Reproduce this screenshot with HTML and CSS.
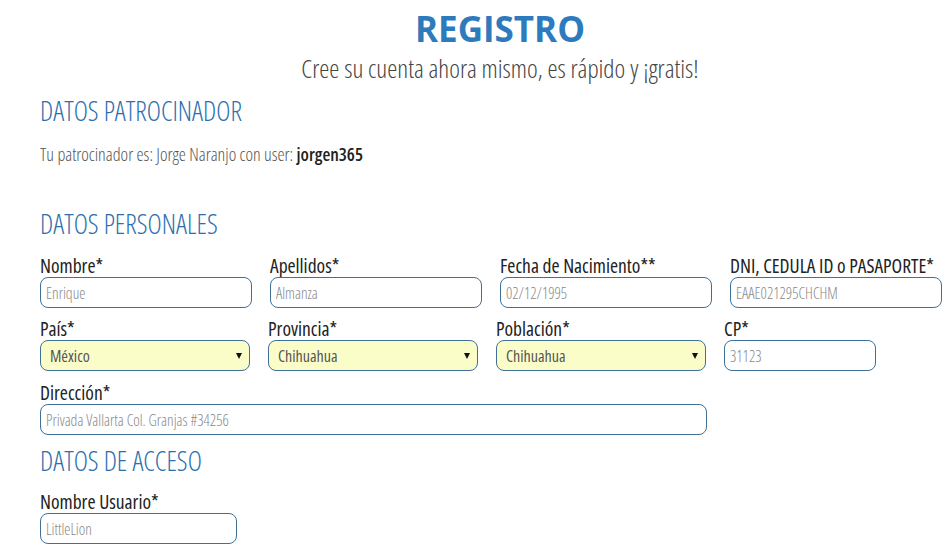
FILE: index.html
```html
<!DOCTYPE html>
<html lang="es">
<head>
<meta charset="utf-8">
<title>Registro</title>
<link rel="stylesheet" href="styles.css">
</head>
<body>
<div class="page">
  <header class="hero">
    <h1 class="title">REGISTRO</h1>
    <p class="subtitle">Cree su cuenta ahora mismo, es rápido y ¡gratis!</p>
  </header>

  <section class="sponsor">
    <h2 class="section-title">DATOS PATROCINADOR</h2>
    <p class="sponsor-text">Tu patrocinador es: Jorge Naranjo con user: <b>jorgen365</b></p>
  </section>

  <section class="personal">
    <h2 class="section-title">DATOS PERSONALES</h2>
    <div class="row row-a">
      <label class="field"><span class="lbl">Nombre*</span><input class="inp" placeholder="Enrique"></label>
      <label class="field"><span class="lbl">Apellidos*</span><input class="inp" placeholder="Almanza"></label>
      <label class="field"><span class="lbl">Fecha de Nacimiento**</span><input class="inp" placeholder="02/12/1995"></label>
      <label class="field"><span class="lbl">DNI, CEDULA ID o PASAPORTE*</span><input class="inp" placeholder="EAAE021295CHCHM"></label>
    </div>
    <div class="row row-b">
      <label class="field sel-field"><span class="lbl">País*</span><span class="sel-wrap"><select class="sel"><option>México</option></select></span></label>
      <label class="field sel-field"><span class="lbl">Provincia*</span><span class="sel-wrap"><select class="sel"><option>Chihuahua</option></select></span></label>
      <label class="field sel-field"><span class="lbl">Población*</span><span class="sel-wrap"><select class="sel"><option>Chihuahua</option></select></span></label>
      <label class="field cp-field"><span class="lbl">CP*</span><input class="inp" placeholder="31123"></label>
    </div>
    <div class="row row-c">
      <label class="field addr-field"><span class="lbl">Dirección*</span><input class="inp" placeholder="Privada Vallarta Col. Granjas #34256"></label>
    </div>
  </section>

  <section class="access">
    <h2 class="section-title">DATOS DE ACCESO</h2>
    <div class="row row-d">
      <label class="field user-field"><span class="lbl">Nombre Usuario*</span><input class="inp" placeholder="LittleLion"></label>
    </div>
  </section>
</div>
</body>
</html>
```

FILE: styles.css
```css
* { box-sizing: border-box; }
html, body { margin: 0; padding: 0; background: #fff; }
body {
  font-family: "Open Sans", "Liberation Sans", sans-serif;
  font-stretch: 75%;
  color: #333;
  overflow: hidden;
}
.page {
  width: 920px;
  margin-left: 40px;
}
.hero { text-align: center; }
.title {
  margin: 5px 0 0;
  font-family: "Open Sans", sans-serif;
  font-stretch: 100%;
  font-weight: 700;
  font-size: 35px;
  line-height: 48px;
  color: #2d7bbd;
}
.subtitle {
  margin: 0;
  font-size: 25.5px;
  font-weight: 300;
  line-height: 30px;
  color: #444;
}
.section-title {
  margin: 0;
  font-size: 27px;
  font-weight: 300;
  line-height: 34px;
  color: #2d6fae;
}
.sponsor { margin-top: 11px; }
.sponsor-text {
  margin: 15px 0 0;
  font-size: 18px;
  font-weight: 300;
  color: #555;
  line-height: 22px;
}
.sponsor-text b { font-weight: 600; color: #222; }
.personal { margin-top: 42px; }
.row { display: flex; }
.row-a { margin-top: 14px; gap: 18px; }
.row-b { margin-top: 10px; gap: 18px; }
.row-c { margin-top: 11px; }
.field { display: flex; flex-direction: column; }
.row-a .field { width: 212px; }
.lbl {
  font-size: 19.5px;
  font-weight: 400;
  color: #222;
  line-height: 22px;
  white-space: nowrap;
}
.inp {
  display: block;
  width: 100%;
  height: 31px;
  margin: 0;
  border: 1px solid #3f7098;
  border-radius: 8px;
  padding: 0 5px;
  font-family: inherit;
  font-stretch: 75%;
  font-size: 15.5px;
  font-weight: 300;
  color: #444;
  background: #fff;
  outline: none;
}
.inp::placeholder { color: #888; opacity: 1; }
.sel-field { width: 210px; }
.sel-wrap { position: relative; display: block; }
.sel-wrap::after {
  content: "";
  position: absolute;
  right: 8px;
  top: 13px;
  border-left: 3px solid transparent;
  border-right: 3px solid transparent;
  border-top: 6px solid #111;
  pointer-events: none;
}
.sel {
  display: block;
  width: 100%;
  height: 31px;
  margin: 0;
  appearance: none;
  -webkit-appearance: none;
  border: 1px solid #3f7098;
  border-radius: 8px;
  padding: 0 9px;
  background: #fbfdc9;
  font-family: inherit;
  font-stretch: 75%;
  font-size: 16px;
  font-weight: 400;
  color: #555;
  outline: none;
}
.cp-field { width: 152px; }
.addr-field { width: 667px; }
.access { margin-top: 9px; }
.row-d { margin-top: 13px; }
.user-field { width: 197px; }
```
